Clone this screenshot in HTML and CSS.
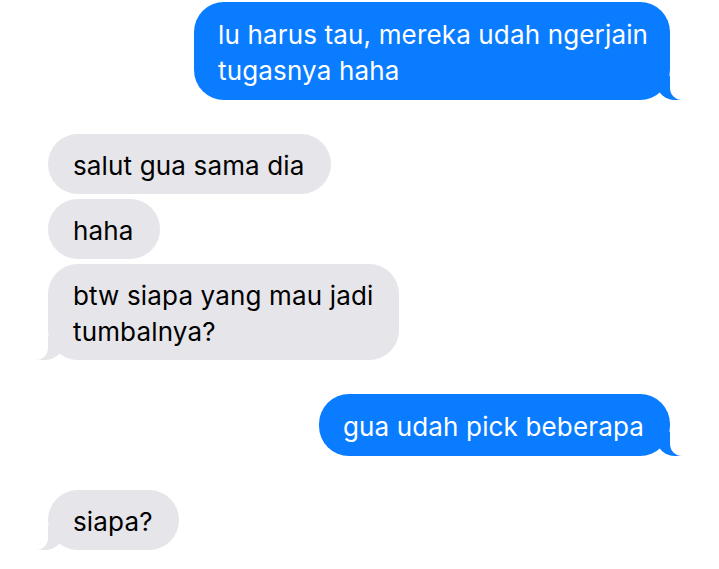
FILE: index.html
```html
<!DOCTYPE html>
<html lang="id">
<head>
<meta charset="utf-8">
<title>Chat</title>
<link rel="stylesheet" href="styles.css">
</head>
<body>
<div class="chat">
  <div class="bubble sent tail full">lu harus tau, mereka udah ngerjain<br>tugasnya haha</div>
  <div class="group">
    <div class="bubble received">salut gua sama dia</div>
    <div class="bubble received">haha</div>
    <div class="bubble received tail">btw siapa yang mau jadi<br>tumbalnya?</div>
  </div>
  <div class="bubble sent tail">gua udah pick beberapa</div>
  <div class="bubble received tail">siapa?</div>
</div>
</body>
</html>
```
FILE: styles.css
```css
html, body {
  margin: 0;
  padding: 0;
  background: #ffffff;
}

.chat {
  display: flex;
  flex-direction: column;
  gap: 34px;
  padding: 2px 49px 0 48px;
  font-family: Inter, "Noto Sans", sans-serif;
  font-size: 26px;
  line-height: 36px;
}

.group {
  display: flex;
  flex-direction: column;
  align-items: flex-start;
  gap: 5px;
}

.bubble {
  position: relative;
  max-width: 426px;
  padding: 14px 26px 10px 25px;
  border-radius: 30px;
  letter-spacing: 0.15px;
  white-space: nowrap;
}

.full {
  width: 428px;
}

.sent {
  align-self: flex-end;
  background: #0a7cff;
  color: #ffffff;
  padding: 15px 26px 11px 24px;
}

.received {
  align-self: flex-start;
  background: #e5e5ea;
  color: #000000;
}

.tail::before,
.tail::after {
  content: "";
  position: absolute;
  bottom: 0;
  height: 24px;
}

.sent.tail::before {
  right: -13px;
  width: 26px;
  background: #0a7cff;
  border-bottom-left-radius: 18px 16px;
}

.sent.tail::after {
  right: -26px;
  width: 26px;
  background: #ffffff;
  border-bottom-left-radius: 12px;
}

.received.tail::before {
  left: -11px;
  width: 26px;
  background: #e5e5ea;
  border-bottom-right-radius: 18px 16px;
}

.received.tail::after {
  left: -26px;
  width: 26px;
  background: #ffffff;
  border-bottom-right-radius: 12px;
}
```
